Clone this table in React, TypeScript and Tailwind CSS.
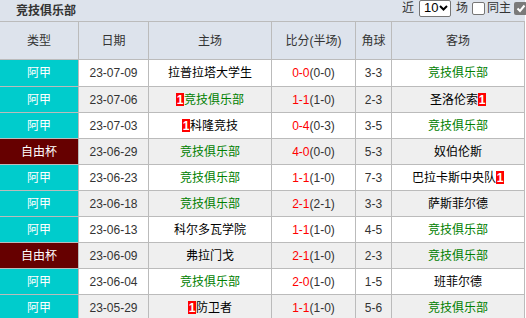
import React from "react";

type Row = {
   kind: string;
   date: string;
   home: string;
   homeWe?: boolean;
   homeCard?: boolean;
   ft: string;
   ht: string;
   corner: string;
   away: string;
   awayWe?: boolean;
   awayCard?: boolean;
};

const rows: Row[] = [
   { kind: "阿甲", date: "23-07-09", home: "拉普拉塔大学生", ft: "0-0", ht: "(0-0)", corner: "3-3", away: "竞技俱乐部", awayWe: true },
   { kind: "阿甲", date: "23-07-06", home: "竞技俱乐部", homeWe: true, homeCard: true, ft: "1-1", ht: "(1-0)", corner: "2-3", away: "圣洛伦索", awayCard: true },
   { kind: "阿甲", date: "23-07-03", home: "科隆竞技", homeCard: true, ft: "0-4", ht: "(0-3)", corner: "3-5", away: "竞技俱乐部", awayWe: true },
   { kind: "自由杯", date: "23-06-29", home: "竞技俱乐部", homeWe: true, ft: "4-0", ht: "(0-0)", corner: "5-3", away: "奴伯伦斯" },
   { kind: "阿甲", date: "23-06-23", home: "竞技俱乐部", homeWe: true, ft: "1-1", ht: "(1-0)", corner: "7-3", away: "巴拉卡斯中央队", awayCard: true },
   { kind: "阿甲", date: "23-06-18", home: "竞技俱乐部", homeWe: true, ft: "2-1", ht: "(2-1)", corner: "3-3", away: "萨斯菲尔德" },
   { kind: "阿甲", date: "23-06-13", home: "科尔多瓦学院", ft: "1-1", ht: "(1-0)", corner: "4-5", away: "竞技俱乐部", awayWe: true },
   { kind: "自由杯", date: "23-06-09", home: "弗拉门戈", ft: "2-1", ht: "(1-0)", corner: "2-3", away: "竞技俱乐部", awayWe: true },
   { kind: "阿甲", date: "23-06-04", home: "竞技俱乐部", homeWe: true, ft: "2-0", ht: "(1-0)", corner: "1-5", away: "班菲尔德" },
   { kind: "阿甲", date: "23-05-29", home: "防卫者", homeCard: true, ft: "1-1", ht: "(1-0)", corner: "5-6", away: "竞技俱乐部", awayWe: true },
];

const cols = "grid grid-cols-[79px_70px_123px_84px_36px_133px]";
const cell = "flex items-center justify-center border-r border-b border-[#bbbbbb]";

function Card() {
   return (
      <span className="inline-flex h-[13px] w-[8px] items-center justify-center bg-[#ff0000] text-[12px] font-bold leading-none text-white">
         1
      </span>
   );
}

function Team({ name, we, card, cardAfter }: { name: string; we?: boolean; card?: boolean; cardAfter?: boolean }) {
   return (
      <span className={`flex items-center ${we ? "text-[#008000]" : "text-black"}`}>
         {card && !cardAfter && <Card />}
         <span>{name}</span>
         {card && cardAfter && <Card />}
      </span>
   );
}

export default function App() {
   return (
      <div className="w-[526px] h-[318px] overflow-hidden bg-white font-['Liberation_Sans','Noto_Sans_CJK_SC',sans-serif] text-[12px] text-[#333333]">
         <div className="w-[525px]">
            <div className="relative flex h-[22px] items-center border-b border-[#bbbbbb] bg-[#dde3ec] pl-4">
               <span className="font-bold text-[#333333]">竞技俱乐部</span>
               <div className="absolute right-[-2px] top-[-1px] flex items-center">
                  <span className="mr-[5px] text-[#333333]">近</span>
                  <div className="flex h-[17px] w-[32px] items-center justify-between rounded-[2px] border border-[#767676] bg-white pl-[4px] pr-[2px] text-[13px] text-black">
                     <span>10</span>
                     <svg width="9" height="6" viewBox="0 0 9 6">
                        <path d="M1 1 L4.5 4.5 L8 1" fill="none" stroke="#000" strokeWidth="2" />
                     </svg>
                  </div>
                  <span className="ml-[5px] text-[#333333]">场</span>
                  <span className="ml-[4px] h-[13px] w-[13px] rounded-[2px] border border-[#767676] bg-white" />
                  <span className="ml-[2px] text-[#333333]">同主</span>
                  <span className="ml-[3px] flex h-[13px] w-[13px] items-center justify-center rounded-[2px] bg-[#7a7a7a]">
                     <svg width="10" height="9" viewBox="0 0 10 9">
                        <path d="M1.5 4.5 L4 7 L8.5 1.5" fill="none" stroke="#fff" strokeWidth="2" />
                     </svg>
                  </span>
               </div>
            </div>

            <div className={`${cols} h-[38px] bg-[#dde3ec] text-[#333333]`}>
               <div className={cell}>类型</div>
               <div className={cell}>日期</div>
               <div className={cell}>主场</div>
               <div className={cell}>比分(半场)</div>
               <div className={cell}>角球</div>
               <div className={cell}>客场</div>
            </div>

            {rows.map((r, i) => (
               <div key={i} className={`${cols} ${i === 0 ? "h-[27px]" : "h-[26px]"} ${i % 2 === 1 ? "bg-[#efefef]" : "bg-white"}`}>
                  <div className={`${cell} text-white ${r.kind === "自由杯" ? "bg-[#660000]" : "bg-[#00cccc]"}`}>{r.kind}</div>
                  <div className={cell}>{r.date}</div>
                  <div className={cell}>
                     <Team name={r.home} we={r.homeWe} card={r.homeCard} />
                  </div>
                  <div className={cell}>
                     <span className="text-[#ff0000]">{r.ft}</span>
                     <span>{r.ht}</span>
                  </div>
                  <div className={cell}>{r.corner}</div>
                  <div className={cell}>
                     <Team name={r.away} we={r.awayWe} card={r.awayCard} cardAfter />
                  </div>
               </div>
            ))}
         </div>
      </div>
   );
}
